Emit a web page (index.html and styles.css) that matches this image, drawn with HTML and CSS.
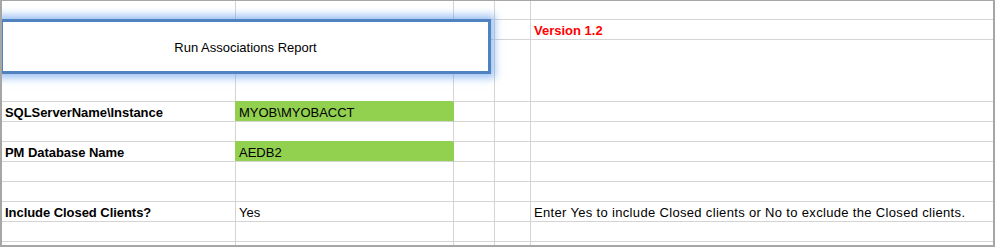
FILE: index.html
```html
<!DOCTYPE html>
<html lang="en">

<head>
  <meta charset="UTF-8">
  <meta name="viewport" content="width=device-width, initial-scale=1.0">
  <title>Run Associations Report</title>
  <link rel="stylesheet" href="styles.css">
</head>

<body>

  <div class="sheet">
    <div class="grid">
      <div class="row first">
        <div></div><div></div><div></div><div></div><div></div>
      </div>
      <div class="row">
        <div></div><div></div><div></div><div></div><div class="version">Version 1.2</div>
      </div>
      <div class="row tall">
        <div></div><div></div><div></div><div></div><div></div>
      </div>
      <div class="row">
        <div class="label">SQLServerName\Instance</div><div class="fill">MYOB\MYOBACCT</div><div></div><div></div><div></div>
      </div>
      <div class="row">
        <div></div><div></div><div></div><div></div><div></div>
      </div>
      <div class="row">
        <div class="label">PM Database Name</div><div class="fill">AEDB2</div><div></div><div></div><div></div>
      </div>
      <div class="row">
        <div></div><div></div><div></div><div></div><div></div>
      </div>
      <div class="row">
        <div></div><div></div><div></div><div></div><div></div>
      </div>
      <div class="row">
        <div class="label">Include Closed Clients?</div><div>Yes</div><div></div><div></div><div class="note">Enter Yes to include Closed clients or No to exclude the Closed clients.</div>
      </div>
      <div class="row">
        <div></div><div></div><div></div><div></div><div></div>
      </div>
      <div class="row end">
        <div></div><div></div><div></div><div></div><div></div>
      </div>

      <!-- button shape floats over the cells -->
      <div class="report-btn">Run Associations Report</div>
    </div>
  </div>

</body>

</html>
```

FILE: styles.css
```css
* {
  margin: 0;
  padding: 0;
  box-sizing: border-box;
}

body {
  font-family: "Liberation Sans", Arial, sans-serif;
  font-size: 13px;
  color: #000;
  background: #fff;
}

.sheet {
  width: 995px;
  height: 247px;
  border: 2px solid #a6a6a6;
  border-top-width: 1px;
}

.grid {
  position: relative;
  overflow: hidden;
  height: 100%;
}

.row {
  display: grid;
  grid-template-columns: 234px 218px 41px 36px 1fr;
  height: 20px;
}

.row.first {
  height: 19px;
}

.row.tall {
  height: 62px;
}

.row.end {
  height: 3px;
}

.row > div {
  display: flex;
  align-items: flex-end;
  padding: 0 3px 1px;
  line-height: 15px;
  white-space: nowrap;
  border-right: 1px solid #d4d4d4;
  border-bottom: 1px solid #d4d4d4;
}

.row > div:last-child {
  border-right: none;
}

.row.end > div {
  border-bottom: none;
}

.label {
  font-weight: bold;
  letter-spacing: -0.05px;
}

.version {
  font-weight: bold;
  color: #ff0000;
}

.note {
  letter-spacing: 0.33px;
}

.fill {
  background: #92d050;
  border-right-color: #92d050 !important;
  box-shadow: -1px -1px 0 #92d050;
}

.report-btn {
  position: absolute;
  left: -2px;
  top: 18px;
  width: 491px;
  height: 55px;
  display: flex;
  align-items: center;
  justify-content: center;
  padding-top: 2px;
  background: #fff;
  border: 3px solid #5082c0;
  box-shadow: 0 0 8px 4px rgba(105, 160, 235, 0.65);
}
```
